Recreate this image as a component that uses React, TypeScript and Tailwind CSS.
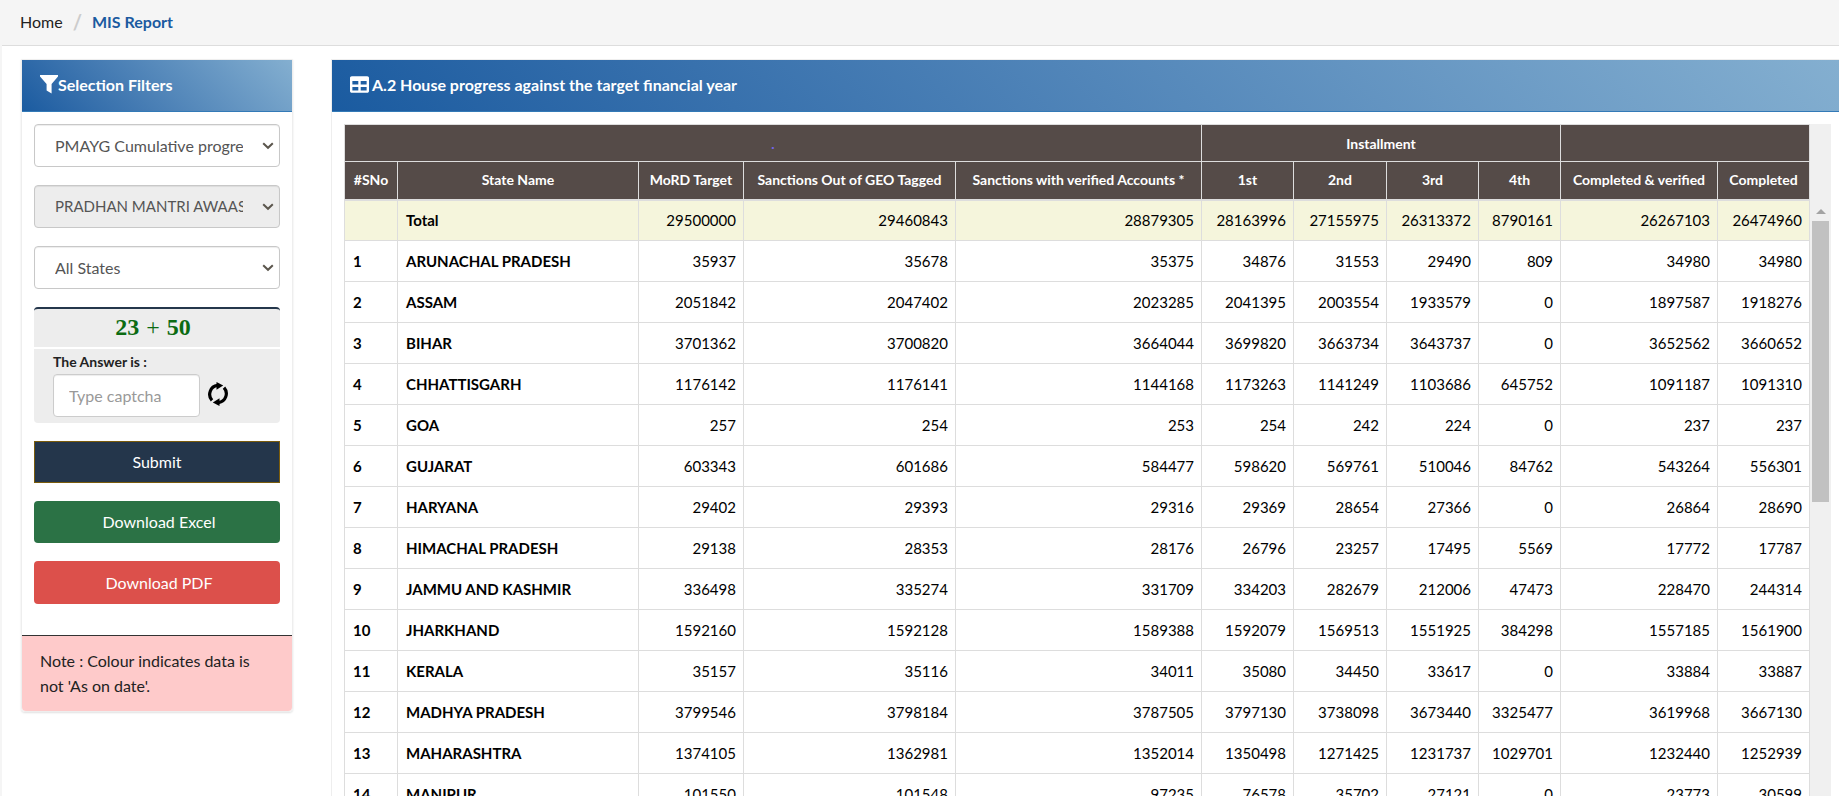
import { FaTable } from "react-icons/fa";

type Row = { no: string; name: string; values: number[] };

const rows: Row[] = [
  { no: "", name: "Total", values: [29500000, 29460843, 28879305, 28163996, 27155975, 26313372, 8790161, 26267103, 26474960] },
  { no: "1", name: "ARUNACHAL PRADESH", values: [35937, 35678, 35375, 34876, 31553, 29490, 809, 34980, 34980] },
  { no: "2", name: "ASSAM", values: [2051842, 2047402, 2023285, 2041395, 2003554, 1933579, 0, 1897587, 1918276] },
  { no: "3", name: "BIHAR", values: [3701362, 3700820, 3664044, 3699820, 3663734, 3643737, 0, 3652562, 3660652] },
  { no: "4", name: "CHHATTISGARH", values: [1176142, 1176141, 1144168, 1173263, 1141249, 1103686, 645752, 1091187, 1091310] },
  { no: "5", name: "GOA", values: [257, 254, 253, 254, 242, 224, 0, 237, 237] },
  { no: "6", name: "GUJARAT", values: [603343, 601686, 584477, 598620, 569761, 510046, 84762, 543264, 556301] },
  { no: "7", name: "HARYANA", values: [29402, 29393, 29316, 29369, 28654, 27366, 0, 26864, 28690] },
  { no: "8", name: "HIMACHAL PRADESH", values: [29138, 28353, 28176, 26796, 23257, 17495, 5569, 17772, 17787] },
  { no: "9", name: "JAMMU AND KASHMIR", values: [336498, 335274, 331709, 334203, 282679, 212006, 47473, 228470, 244314] },
  { no: "10", name: "JHARKHAND", values: [1592160, 1592128, 1589388, 1592079, 1569513, 1551925, 384298, 1557185, 1561900] },
  { no: "11", name: "KERALA", values: [35157, 35116, 34011, 35080, 34450, 33617, 0, 33884, 33887] },
  { no: "12", name: "MADHYA PRADESH", values: [3799546, 3798184, 3787505, 3797130, 3738098, 3673440, 3325477, 3619968, 3667130] },
  { no: "13", name: "MAHARASHTRA", values: [1374105, 1362981, 1352014, 1350498, 1271425, 1231737, 1029701, 1232440, 1252939] },
  { no: "14", name: "MANIPUR", values: [101550, 101548, 97235, 76578, 35702, 27121, 0, 23773, 30599] },
];

const columns = [
  "#SNo",
  "State Name",
  "MoRD Target",
  "Sanctions Out of GEO Tagged",
  "Sanctions with verified Accounts *",
  "1st",
  "2nd",
  "3rd",
  "4th",
  "Completed & verified",
  "Completed",
];

function FilterIcon() {
  return (
    <svg viewBox="0 0 18 19" className="h-[19px] w-[18px] shrink-0 fill-current" aria-hidden="true">
      <path d="M0 0H18V1.6L11.6 9V18.5L6.6 15.5V9L0 1.6Z" />
    </svg>
  );
}

function RefreshIcon() {
  return (
    <svg viewBox="0 0 22 24" className="h-6 w-[22px]" aria-hidden="true">
      <g fill="none" stroke="#000" strokeWidth="3.2">
        <path d="M5 18.4A8.8 9 0 0 1 10.5 3.4" />
        <path d="M17 5.6A8.8 9 0 0 1 11.5 20.6" />
      </g>
      <path d="M9.5 0L16.2 3.6L9.5 7.8Z" />
      <path d="M12.5 24L5.8 20.4L12.5 16.2Z" />
    </svg>
  );
}

function SelectBox({ label, options, disabled }: { label: string; options: string[]; disabled?: boolean }) {
  return (
    <div className="relative">
      <select
        aria-label={label}
        disabled={disabled}
        className="block h-[43px] w-full appearance-none rounded-[4px] border border-[#c8c8c8] bg-white pr-9 pl-5 text-[16px] text-[#555] shadow-[inset_0_1px_1px_rgba(0,0,0,0.075)] disabled:bg-[#ededed] disabled:text-[15px] disabled:opacity-100"
      >
        {options.map((o) => (
          <option key={o}>{o}</option>
        ))}
      </select>
      <svg viewBox="0 0 12 8" className="pointer-events-none absolute top-[18px] right-[6px] h-2 w-3" aria-hidden="true">
        <path d="M1.2 1.2L6 5.8L10.8 1.2" fill="none" stroke="#5b564d" strokeWidth="2" />
      </svg>
    </div>
  );
}

const headCell = "border border-[#ddd] px-2 text-center font-bold text-white";
const panelTitle =
  "flex h-[52px] shrink-0 items-center border-b border-[#337ab7] bg-linear-45 from-[#1a5ba0] to-[#84afd0] pb-[2px] pl-[18px] font-bold text-white";

export default function App() {
  return (
    <div className="flex h-screen flex-col overflow-hidden border-l-2 border-[#f5f5f5] bg-white font-['Lato','Liberation_Sans',sans-serif] text-[16px] text-[#222]">
      <nav aria-label="Breadcrumb" className="flex h-[46px] shrink-0 items-center gap-[10px] border-b border-[#ddd] bg-[#f5f5f5] pb-[2px] pl-[18px]">
        <a href="#home">Home</a>
        <span className="text-xl font-bold text-[#ccc]">/</span>
        <a href="#report" className="font-bold text-[#1b5aa0]">MIS Report</a>
      </nav>

      <div className="flex min-h-0 flex-1 items-start gap-[38px] pt-[13px] pl-[19px]">
        <aside className="w-[272px] shrink-0 rounded-b-[4px] border border-[#eee] shadow-[0_1px_2px_rgba(0,0,0,0.12)]">
          <h2 className={panelTitle}>
            <FilterIcon />
            Selection Filters
          </h2>
          <form className="flex flex-col gap-[18px] px-3 pt-3 pb-[31px]" onSubmit={(e) => e.preventDefault()}>
            <SelectBox label="Report" options={["PMAYG Cumulative progress report"]} />
            <SelectBox label="Scheme" options={["PRADHAN MANTRI AWAAS YOJANA GRAMIN"]} disabled />
            <SelectBox label="State" options={["All States"]} />

            <div className="flex flex-col gap-[2px]">
              <div className="flex h-10 items-center justify-center gap-[7px] rounded-t-[4px] border-t-2 border-[#24364b] bg-[#ededed] pr-2 pb-[2px] font-['Liberation_Serif',serif] text-[24px] font-bold text-[#0c6b12]">
                <span>23</span>
                <span className="font-normal">+</span>
                <span>50</span>
              </div>
              <div className="rounded-b-[4px] bg-[#ededed] px-[19px] pt-[3px] pb-[6px]">
                <label htmlFor="captcha" className="block h-[22px] text-[14px] leading-5 font-bold">
                  The Answer is :
                </label>
                <div className="flex gap-[7px]">
                  <input
                    id="captcha"
                    placeholder="Type captcha"
                    className="h-[43px] w-[147px] rounded-[4px] border border-[#ccc] bg-white px-[15px] text-[16px] shadow-[inset_0_1px_1px_rgba(0,0,0,0.075)] placeholder:text-[#999]"
                  />
                  <button type="button" aria-label="Refresh captcha" className="mb-1">
                    <RefreshIcon />
                  </button>
                </div>
              </div>
            </div>

            <button type="submit" className="h-[42px] border border-[#7a5c0c] bg-[#24364b] text-white">Submit</button>
            <button type="button" className="h-[42px] rounded-[4px] bg-[#2b7245] pl-1 text-white">Download Excel</button>
            <button type="button" className="h-[43px] rounded-[4px] bg-[#dc504b] pl-1 text-white">Download PDF</button>
          </form>
          <p className="rounded-b-[4px] border-t border-[#333] bg-[#fecaca] px-[18px] pt-3 pb-[13px] leading-[25px]">
            Note : Colour indicates data is not 'As on date'.
          </p>
        </aside>

        <main className="flex h-full min-w-0 flex-1 flex-col border-t border-l border-[#eee]">
          <h2 className={panelTitle}>
            <FaTable className="mr-[3px] size-[19px]" aria-hidden="true" />
            A.2 House progress against the target financial year
          </h2>
          <div className="flex min-h-0 flex-1 pt-3 pr-2 pl-3">
            <div className="min-w-0 flex-1 overflow-hidden">
              <table className="w-full table-fixed border-collapse text-[15px] text-black">
                <colgroup>
                  <col className="w-[53px]" />
                  <col />
                  <col className="w-[105px]" />
                  <col className="w-[212px]" />
                  <col className="w-[246px]" />
                  <col className="w-[92px]" />
                  <col className="w-[93px]" />
                  <col className="w-[92px]" />
                  <col className="w-[82px]" />
                  <col className="w-[157px]" />
                  <col className="w-[92px]" />
                </colgroup>
                <thead className="bg-[#554b48] text-[14px]">
                  <tr className="h-[37px]">
                    <th colSpan={5} className={headCell}>
                      <a href="#details" className="text-[#7466ee]">.</a>
                    </th>
                    <th colSpan={4} className={headCell}>Installment</th>
                    <th colSpan={2} className={headCell} />
                  </tr>
                  <tr className="h-[38px]">
                    {columns.map((c) => (
                      <th key={c} className="border border-b-2 border-[#ddd] pb-[2px] text-center font-bold whitespace-nowrap text-white">
                        {c}
                      </th>
                    ))}
                  </tr>
                </thead>
                <tbody>
                  {rows.map((r) => (
                    <tr key={r.name} className="h-[41px] first:bg-[#f5f5dc]">
                      <td className="border border-[#ddd] px-2 font-bold">{r.no}</td>
                      <td className="border border-[#ddd] px-2 font-bold">{r.name}</td>
                      {r.values.map((v, i) => (
                        <td key={i} className="border border-[#ddd] px-[7px] text-right">{v}</td>
                      ))}
                    </tr>
                  ))}
                </tbody>
              </table>
            </div>
            <div className="flex w-[21px] shrink-0 flex-col bg-[#f0f0f0] pr-[2px] pl-[2px]" aria-hidden="true">
              <div className="mt-[85px] h-[5px] self-center border-x-[5px] border-b-[5px] border-x-transparent border-b-[#a3a3a3]" />
              <div className="mt-[7px] h-[281px] bg-[#c1c1c1]" />
            </div>
          </div>
        </main>
      </div>
    </div>
  );
}
